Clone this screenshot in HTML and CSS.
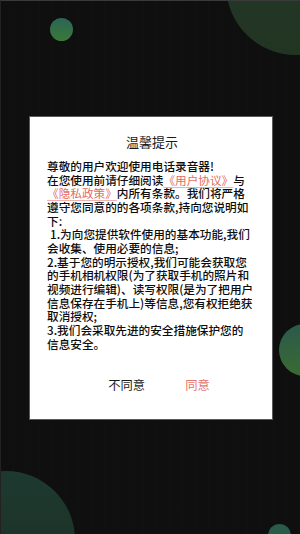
FILE: index.html
```html
<!DOCTYPE html>
<html lang="zh">
<head>
<meta charset="utf-8">
<link rel="stylesheet" href="styles.css">
</head>
<body>
<div class="screen">
  <div class="bubble b-top-right"></div>
  <div class="bubble b-top-left"></div>
  <div class="bubble b-mid-right"></div>
  <div class="bubble b-bottom-left"></div>
  <div class="bubble b-bottom-right"></div>

  <div class="dialog">
    <div class="title">温馨提示</div>
    <div class="content">
      <div class="line">尊敬的用户欢迎使用电话录音器!</div>
      <div class="line">在您使用前请仔细阅读<span class="link">《用户协议》</span>与</div>
      <div class="line"><span class="link">《隐私政策》</span>内所有条款。我们将严格</div>
      <div class="line">遵守您同意的的各项条款,持向您说明如</div>
      <div class="line">下:</div>
      <div class="line indent">1.为向您提供软件使用的基本功能,我们</div>
      <div class="line">会收集、使用必要的信息;</div>
      <div class="line">2.基于您的明示授权,我们可能会获取您</div>
      <div class="line">的手机相机权限(为了获取手机的照片和</div>
      <div class="line">视频进行编辑)、读写权限(是为了把用户</div>
      <div class="line">信息保存在手机上)等信息,您有权拒绝获</div>
      <div class="line">取消授权;</div>
      <div class="line">3.我们会采取先进的安全措施保护您的</div>
      <div class="line">信息安全。</div>
    </div>
    <div class="actions">
      <span class="btn btn-no">不同意</span>
      <span class="btn btn-yes">同意</span>
    </div>
  </div>
</div>
</body>
</html>
```
FILE: styles.css
```css
* { box-sizing: border-box; }
html, body {
  margin: 0;
  padding: 0;
  background: #101010;
}
body {
  font-family: "Noto Sans CJK SC", "Noto Sans", sans-serif;
}
.screen {
  position: relative;
  width: 300px;
  height: 534px;
  overflow: hidden;
  background-color: #0f0f0f;
  background-image: repeating-linear-gradient(90deg, rgba(255,255,255,0) 0 12px, rgba(255,255,255,0.006) 12px 13px);
  border-top: 1px solid #3a3a3a;
  border-left: 1px solid #222;
  padding: 115px 0 0 28px;
}
.bubble {
  position: absolute;
  border-radius: 50%;
}
.b-top-right {
  left: 225px;
  top: -86px;
  width: 140px;
  height: 140px;
  background: linear-gradient(180deg, #22382c 0%, #223522 100%);
}
.b-top-left {
  left: 49px;
  top: 17px;
  width: 23px;
  height: 23px;
  background: linear-gradient(180deg, #2a6656 0%, #3b7838 100%);
}
.b-mid-right {
  left: 278px;
  top: 323px;
  width: 52px;
  height: 52px;
  background: linear-gradient(180deg, #2a5a4c 0%, #3a6a32 100%);
}
.b-bottom-left {
  left: -64px;
  top: 470px;
  width: 138px;
  height: 138px;
  background: linear-gradient(180deg, #1d3a30 0%, #1e2c22 100%);
}
.b-bottom-right {
  left: 267px;
  top: 523px;
  width: 23px;
  height: 23px;
  background: #2a5a48;
}
.dialog {
  position: relative;
  width: 244px;
  height: 304px;
  background: #ffffff;
  border: 1px solid #5a5a5a;
  padding: 17px 0 0 17px;
  color: #111;
}
.title {
  width: 210px;
  text-align: center;
  font-size: 13px;
  line-height: 16px;
  color: #1a1a1a;
}
.content {
  margin-top: 9px;
  font-size: 11.65px;
  line-height: 13.66px;
  color: #0d0d0d;
  font-weight: 500;
}
.line {
  white-space: nowrap;
}
.indent {
  padding-left: 3px;
}
.link {
  color: #e46b66;
  font-weight: 400;
  text-decoration: underline;
  text-decoration-color: #f0b0ac;
  text-underline-offset: 2px;
}
.actions {
  margin-top: 27px;
  display: flex;
  justify-content: center;
  gap: 40px;
  width: 226px;
  margin-left: -1px;
}
.btn {
  font-size: 12.3px;
  line-height: 16px;
}
.btn-no { color: #1a1a1a; }
.btn-yes { color: #e57570; }
```
